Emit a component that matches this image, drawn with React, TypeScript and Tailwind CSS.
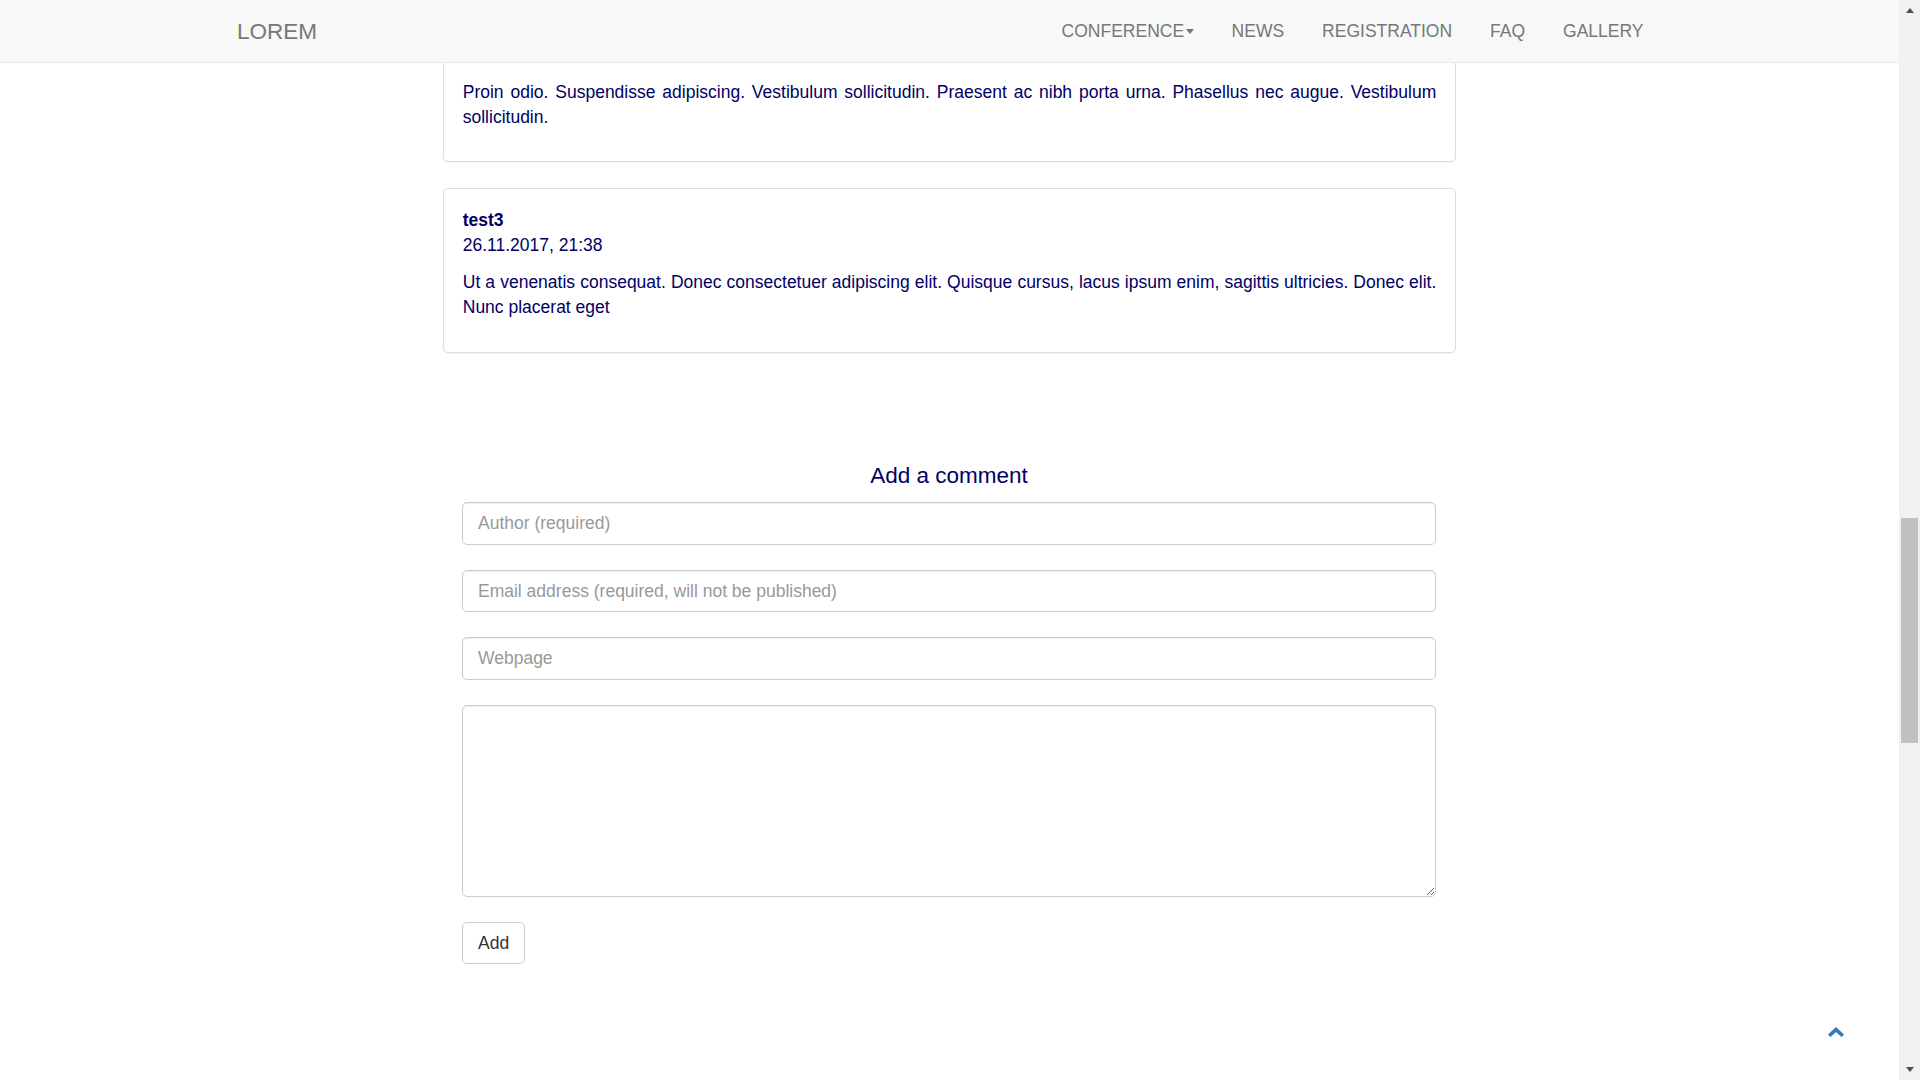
import React from "react";

// Types
interface Comment {
  id: string;
  author: string;
  date: string;
  text: string;
}

const comments: Comment[] = [
  {
    id: "2",
    author: "test2",
    date: "26.11.2017, 21:37",
    text: "Proin odio. Suspendisse adipiscing. Vestibulum sollicitudin. Praesent ac nibh porta urna. Phasellus nec augue. Vestibulum sollicitudin.",
  },
  {
    id: "3",
    author: "test3",
    date: "26.11.2017, 21:38",
    text: "Ut a venenatis consequat. Donec consectetuer adipiscing elit. Quisque cursus, lacus ipsum enim, sagittis ultricies. Donec elit. Nunc placerat eget",
  },
];

const navLinks = ["NEWS", "REGISTRATION", "FAQ", "GALLERY"];

// Navbar
const Navbar = () => {
  return (
    <nav className="absolute top-0 left-0 right-0 z-10 h-[63px] bg-[#f8f8f8] border-b border-[#e7e7e7]">
      <div className="w-[1462px] mx-auto h-full flex items-center justify-between">
        <a className="pl-[18.5px] text-[22.5px] leading-[25px] text-[#777]">LOREM</a>
        <ul className="flex items-center pr-[18px]">
          <li className="px-[19px] text-[17.5px] leading-[25px] text-[#777] flex items-center">
            CONFERENCE
            <span className="ml-[1.5px] w-0 h-0 border-t-[5px] border-t-[#777] border-x-[4.5px] border-x-transparent" />
          </li>
          {navLinks.map((link) => (
            <li
              key={link}
              className="px-[19px] text-[17.5px] leading-[25px] text-[#777]"
            >
              {link}
            </li>
          ))}
        </ul>
      </div>
    </nav>
  );
};

// Comment card
const CommentCard = ({ comment, first }: { comment: Comment; first?: boolean }) => {
  return (
    <div
      className={`border border-[#ddd] rounded-[5px] bg-white shadow-[0_1px_1px_rgba(0,0,0,0.05)] p-[18.75px] mb-[26px] ${
        first ? "mt-[-2.5px]" : ""
      }`}
    >
      <div className="font-bold">{comment.author}</div>
      <p className="mb-[12.5px]">{comment.date}</p>
      <p className="mb-[12.5px] text-justify">{comment.text}</p>
    </div>
  );
};

// Browser-style scrollbar (page is scrolled about halfway)
const ScrollBar = () => {
  return (
    <div className="w-[21px] h-full bg-[#f1f1f1] flex flex-col items-center">
      <div className="h-[21px] flex items-center justify-center">
        <span className="w-0 h-0 border-b-[5px] border-b-[#505050] border-x-[4.5px] border-x-transparent" />
      </div>
      <div className="mt-[497px] w-[17px] h-[225px] bg-[#c1c1c1]" />
      <div className="mt-auto h-[21px] flex items-center justify-center">
        <span className="w-0 h-0 border-t-[5px] border-t-[#505050] border-x-[4.5px] border-x-transparent" />
      </div>
    </div>
  );
};

const inputClass =
  "block w-full h-[42.5px] px-[15px] border border-[#ccc] rounded-[5px] shadow-[inset_0_1px_1px_rgba(0,0,0,0.075)] text-[17.5px] text-[#555] placeholder:text-[#999] outline-none mb-[25px]";

export default function App() {
  return (
    <div className="flex h-screen overflow-hidden bg-white font-['Liberation_Sans',Arial,sans-serif]">
      <div className="relative flex-1 h-full">
        <Navbar />

        <main className="w-[1013px] mx-auto text-[17.5px] leading-[25px] text-[#000066]">
          {comments.map((c, i) => (
            <CommentCard key={c.id} comment={c} first={i === 0} />
          ))}

          {/* Add comment form */}
          <div className="pl-[19px] pr-[20px]">
            <h4 className="mt-[111px] mb-[14px] text-center text-[22.5px] leading-[24.75px]">
              Add a comment
            </h4>
            <input type="text" placeholder="Author (required)" className={inputClass} />
            <input
              type="text"
              placeholder="Email address (required, will not be published)"
              className={inputClass}
            />
            <input type="text" placeholder="Webpage" className={inputClass} />
            <textarea className="block w-full h-[192px] px-[15px] py-[7.5px] border border-[#ccc] rounded-[5px] shadow-[inset_0_1px_1px_rgba(0,0,0,0.075)] text-[17.5px] text-[#555] outline-none mb-[25.5px]" />
            <button className="px-[15px] py-[7.5px] border border-[#ccc] rounded-[5px] bg-white text-[#333] text-[17.5px] leading-[25px]">
              Add
            </button>
          </div>
        </main>

        {/* Scroll to top */}
        <a className="absolute right-[55px] bottom-[43px]">
          <svg width="16" height="10" viewBox="0 0 16 10">
            <path d="M0 7.5 L8 0 L16 7.5 L13.5 10 L8 5 L2.5 10 Z" fill="#337ab7" />
          </svg>
        </a>
      </div>
      <ScrollBar />
    </div>
  );
}
